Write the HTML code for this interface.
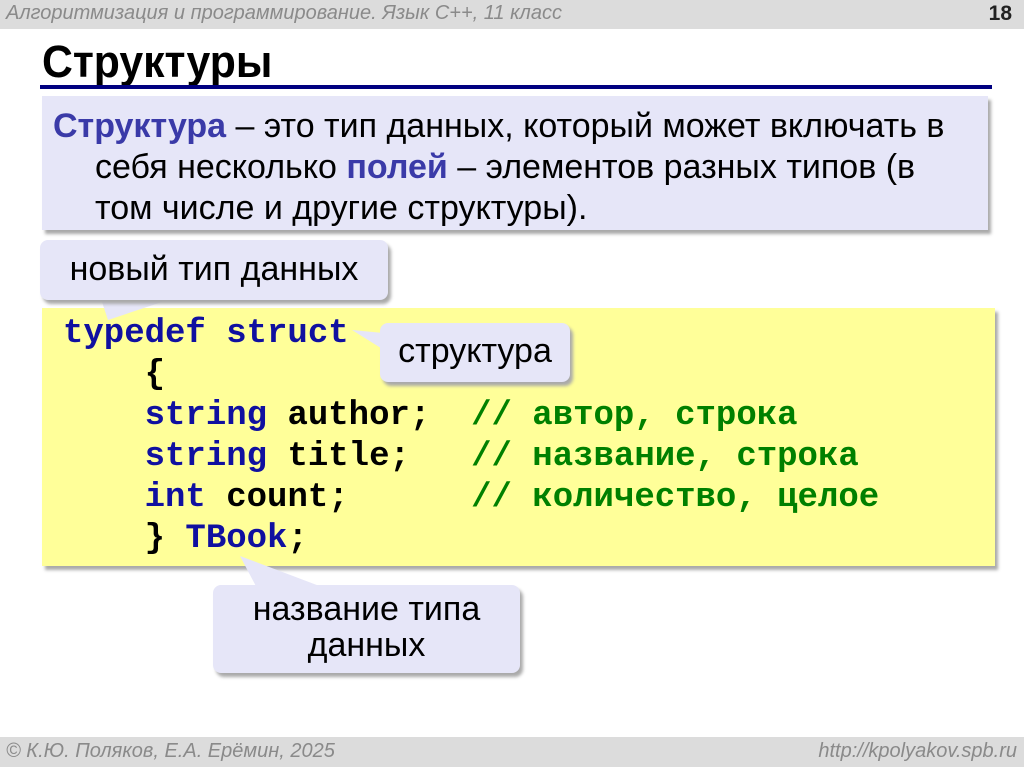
<!DOCTYPE html>
<html><head><meta charset="utf-8"><style>
*{margin:0;padding:0;box-sizing:border-box}
body{width:1024px;height:767px;background:#fff;position:relative;overflow:hidden;font-family:"Liberation Sans",sans-serif}
.abs{position:absolute}
.hdr{left:0;top:0;width:1024px;height:29px;background:#dcdcdc}
.ftr{left:0;top:737px;width:1024px;height:30px;background:#dcdcdc}
.gray{color:#8a8a8a;font-style:italic;font-size:20px}
.box{background:#e6e6f8;box-shadow:3px 4px 3px #aaa;border-radius:8px}
.code{font-family:"Liberation Mono",monospace;font-weight:bold;font-size:34px;line-height:41px;white-space:pre;color:#000}
.k{color:#1010a0}.c{color:#008000}
</style></head><body>
<div class="abs hdr"></div>
<div class="abs gray" style="left:6px;top:2px">Алгоритмизация и программирование. Язык С++, 11 класс</div>
<div class="abs" style="right:12px;top:2px;font-size:21px;font-weight:bold;color:#222">18</div>
<div class="abs" style="left:42px;top:36px;font-size:45px;font-weight:bold;color:#000;transform:scaleX(0.95);transform-origin:0 0">Структуры</div>
<div class="abs" style="left:40px;top:85px;width:952px;height:4px;background:#000080"></div>
<div class="abs box" style="left:42px;top:96px;width:946px;height:134px;border-radius:0"></div>
<div class="abs" style="left:53px;top:106px;white-space:nowrap;font-size:34px;line-height:41px;color:#000"><b style="color:#3a3aa8">Структура</b> – это тип данных, который может включать в<br><span style="padding-left:42px">себя несколько <b style="color:#3a3aa8">полей</b> – элементов разных типов (в</span><br><span style="padding-left:42px">том числе и другие структуры).</span></div>
<div class="abs" style="left:42px;top:308px;width:953px;height:258px;background:#ffff99;box-shadow:3px 4px 3px #aaa"></div>
<div class="abs code" style="left:63px;top:314px"><span class="k">typedef struct</span>
    {
    <span class="k">string</span> author;  <span class="c">// автор, строка</span>
    <span class="k">string</span> title;   <span class="c">// название, строка</span>
    <span class="k">int</span> count;      <span class="c">// количество, целое</span>
    } <span class="k">TBook</span>;</div>
<svg class="abs" style="left:0;top:0" width="1024" height="767">
<polygon points="100,296 180,296 108,320" fill="#e6e6f8"/>
<polygon points="384,333 384,350 352,330" fill="#e6e6f8"/>
<polygon points="258,590 330,590 240,556" fill="#e6e6f8"/>
</svg>
<div class="abs box" style="left:40px;top:240px;width:348px;height:60px;font-size:34px;text-align:center;line-height:58px">новый тип данных</div>
<div class="abs box" style="left:380px;top:323px;width:190px;height:59px;font-size:34px;text-align:center;line-height:57px">структура</div>
<div class="abs box" style="left:213px;top:585px;width:307px;height:88px;font-size:34px;text-align:center;line-height:36px;padding-top:6px">название типа<br>данных</div>
<div class="abs ftr"></div>
<div class="abs gray" style="left:6px;top:740px">© К.Ю. Поляков, Е.А. Ерёмин, 2025</div>
<div class="abs gray" style="right:7px;top:740px">http://kpolyakov.spb.ru</div>
</body></html>
